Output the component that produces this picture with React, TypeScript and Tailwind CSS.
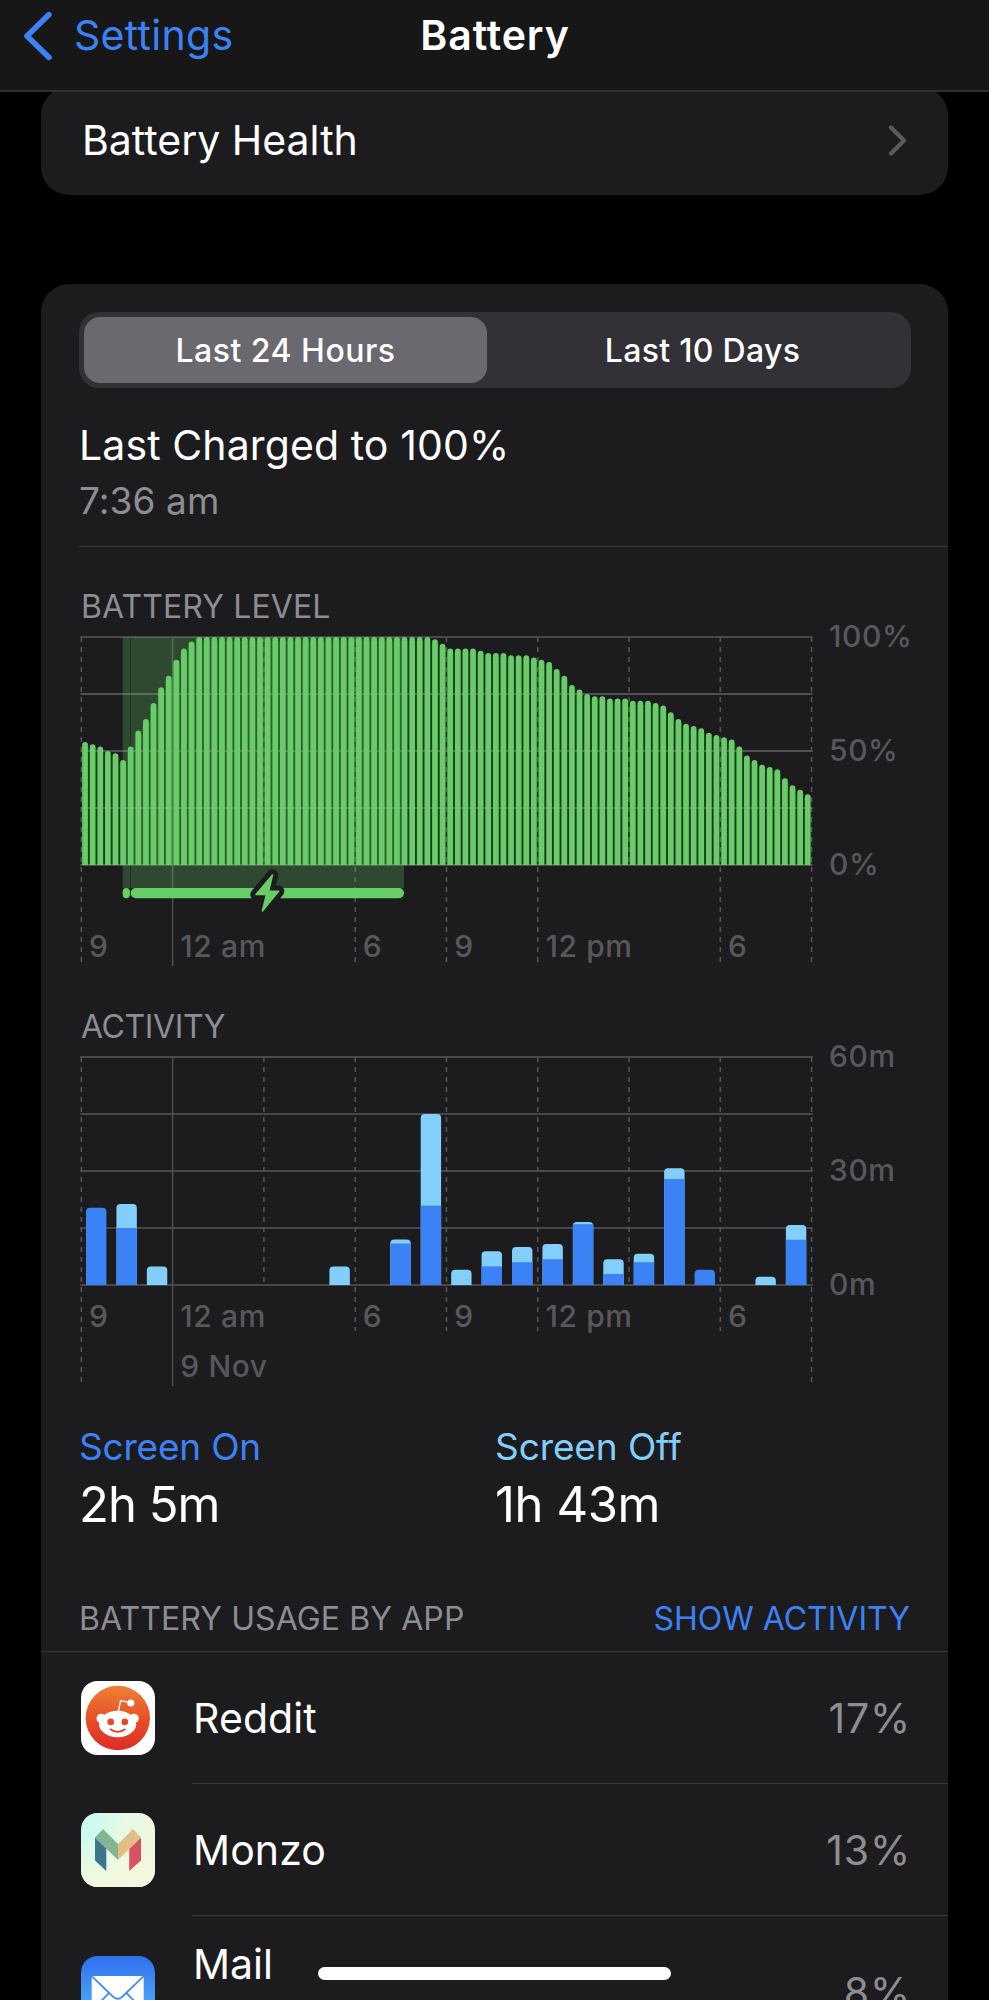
import { ReactNode } from 'react';

const GREEN = '#67ce67';
const SCREEN_ON = '#3c82f7';
const SCREEN_OFF = '#82cffb';

// Plot geometry shared by both charts
const PLOT_X = 2.3;
const PLOT_Y = 10;
const PLOT_W = 730.3;
const PLOT_H = 228;
const HOUR = PLOT_W / 24;
const QUARTER = PLOT_W / 96;

const batteryLevels = [
    54, 53, 52, 50, 49, 46, 52, 59, 64, 71, 78, 83, 90, 95, 98,
    ...Array<number>(31).fill(100),
    99, 97, 95, 95, 95, 95, 94, 93, 93, 93, 92, 92, 92, 91, 90, 89, 86, 83, 79, 77,
    75, 74, 74, 73, 73, 73, 72, 72, 72, 71, 70, 67, 64, 62, 61, 60, 58, 57, 56, 55,
    52, 48, 46, 44, 43, 42, 38, 35, 33, 31
];

interface ActivityHour {
    hour: number;
    on: number;
    total: number;
}

const activity: ActivityHour[] = [
    { hour: 0, on: 20.3, total: 20.3 },
    { hour: 1, on: 15, total: 21.3 },
    { hour: 2, on: 0, total: 4.9 },
    { hour: 8, on: 0, total: 4.9 },
    { hour: 10, on: 10.9, total: 12 },
    { hour: 11, on: 20.9, total: 45 },
    { hour: 12, on: 0, total: 4 },
    { hour: 13, on: 4.9, total: 8.9 },
    { hour: 14, on: 6, total: 10 },
    { hour: 15, on: 6.8, total: 10.8 },
    { hour: 16, on: 16, total: 16.6 },
    { hour: 17, on: 2.9, total: 6.8 },
    { hour: 18, on: 6, total: 8.2 },
    { hour: 19, on: 27.9, total: 30.7 },
    { hour: 20, on: 4, total: 4 },
    { hour: 22, on: 0, total: 2.2 },
    { hour: 23, on: 11.9, total: 15.8 }
];

const xLabels = [
    { tick: 0, text: '9' },
    { tick: 1, text: '12 am' },
    { tick: 3, text: '6' },
    { tick: 4, text: '9' },
    { tick: 5, text: '12 pm' },
    { tick: 7, text: '6' }
];

interface ChartFrameProps {
    yLabels: string[];
    labelY: number;
    tickEnds: number[];
    children: ReactNode;
    overlay?: ReactNode;
}

function ChartFrame({ yLabels, labelY, tickEnds, children, overlay }: ChartFrameProps) {
    return (
        <svg
            width="869"
            height="380"
            viewBox="0 0 869 380"
            className="block overflow-visible text-[30px] font-medium tracking-[0.6px]"
        >
            {[0, 1, 2, 3, 4].map(i => (
                <line
                    key={i}
                    x1={PLOT_X - 1}
                    x2={PLOT_X + PLOT_W + 1}
                    y1={PLOT_Y + (i * PLOT_H) / 4}
                    y2={PLOT_Y + (i * PLOT_H) / 4}
                    stroke="#48484a"
                    strokeWidth="1.8"
                />
            ))}
            {tickEnds.map((end, i) => (
                <line
                    key={i}
                    x1={PLOT_X + i * HOUR * 3}
                    x2={PLOT_X + i * HOUR * 3}
                    y1={PLOT_Y}
                    y2={end}
                    stroke={i === 1 ? '#4c4c4e' : '#525254'}
                    strokeWidth="1.6"
                    strokeDasharray={i === 1 ? undefined : '5 5'}
                />
            ))}
            {children}
            {yLabels.map((label, i) => (
                <text key={label} x="750" y={PLOT_Y + (i * PLOT_H) / 2 + 10.4} fill="#58585b">
                    {label}
                </text>
            ))}
            {xLabels.map(label => (
                <text key={label.tick} x={PLOT_X + label.tick * HOUR * 3 + 7.7} y={labelY} fill="#58585b">
                    {label.text}
                </text>
            ))}
            {overlay}
        </svg>
    );
}

function BatteryLevelChart() {
    const bottom = PLOT_Y + PLOT_H;
    return (
        <ChartFrame
            yLabels={['100%', '50%', '0%']}
            labelY={330}
            tickEnds={[335, 339, 238, 335, 335, 335, 238, 335, 335]}
        >
            <rect x="43.7" y={PLOT_Y} width="7.3" height="251" fill={GREEN} opacity="0.26" />
            <rect x="51.6" y={PLOT_Y} width="273.4" height="251" fill={GREEN} opacity="0.26" />
            {batteryLevels.map((level, i) => {
                const h = (level / 100) * PLOT_H;
                const x = PLOT_X + i * QUARTER + 0.9;
                return (
                    <g key={i} fill={GREEN}>
                        <rect x={x - 0.9} y={bottom - h + 4} width={QUARTER} height={h - 4} opacity="0.15" />
                        <path d={`M${x} ${bottom}V${bottom - h + 2.8}a2.85 2.8 0 0 1 5.7 0V${bottom}z`} />
                    </g>
                );
            })}
            {[1, 2, 3, 4].map(i => (
                <line
                    key={i}
                    x1={PLOT_X}
                    x2={PLOT_X + PLOT_W}
                    y1={PLOT_Y + (i * PLOT_H) / 4}
                    y2={PLOT_Y + (i * PLOT_H) / 4}
                    stroke="#a0a0a0"
                    strokeWidth="1.6"
                    opacity="0.12"
                />
            ))}
            <rect x="43.7" y="261" width="7.2" height="10.2" rx="3.6" fill={GREEN} />
            <rect x="51.7" y="261" width="273.3" height="10.2" rx="5" fill={GREEN} />
            {/* Charging bolt with a cut-out outline */}
            <path
                d="M193.5 248L177 267.6H187.4L183.4 284L199.6 264.2H189.6z"
                fill="#1c1c1e"
                stroke="#1c1c1e"
                strokeWidth="11.5"
                strokeLinejoin="round"
            />
            <path
                d="M193.5 248L177 267.6H187.4L183.4 284L199.6 264.2H189.6z"
                fill={GREEN}
                stroke={GREEN}
                strokeWidth="1.5"
                strokeLinejoin="round"
            />
        </ChartFrame>
    );
}

function ActivityChart() {
    const bottom = PLOT_Y + PLOT_H;
    const w = 20.4;
    return (
        <ChartFrame
            yLabels={['60m', '30m', '0m']}
            labelY={279.5}
            tickEnds={[335, 339, 238, 284, 284, 284, 238, 284, 335]}
            overlay={
                <text x={PLOT_X + HOUR * 3 + 7.7} y="330" fill="#58585b">
                    9 Nov
                </text>
            }
        >
            {activity.map(({ hour, on, total }) => {
                const x = PLOT_X + hour * HOUR + 4.7;
                const top = bottom - (total / 60) * PLOT_H;
                const onTop = bottom - (on / 60) * PLOT_H;
                return (
                    <g key={hour}>
                        <path
                            d={`M${x} ${bottom}V${top + 4}q0 -4 4 -4h${w - 8}q4 0 4 4V${bottom}z`}
                            fill={on === total ? SCREEN_ON : SCREEN_OFF}
                        />
                        {on < total && on > 0 && (
                            <rect x={x} y={onTop} width={w} height={bottom - onTop} fill={SCREEN_ON} />
                        )}
                    </g>
                );
            })}
        </ChartFrame>
    );
}

function RedditIcon() {
    return (
        <svg width="74" height="74" viewBox="0 0 74 74" className="shrink-0">
            <defs>
                <linearGradient id="reddit" x1="0" y1="0" x2="0" y2="1">
                    <stop offset="0" stopColor="#ee8134" />
                    <stop offset="0.5" stopColor="#e65228" />
                    <stop offset="1" stopColor="#dd2b28" />
                </linearGradient>
            </defs>
            <rect width="74" height="74" rx="16.5" fill="#fff" />
            <circle cx="36.8" cy="37" r="32.2" fill="url(#reddit)" />
            <path d="M37.2 31L39.6 19.6L49 21.6" fill="none" stroke="#fff" strokeWidth="1.4" strokeLinejoin="round" />
            <circle cx="49.8" cy="21.9" r="3.5" fill="#fff" />
            <circle cx="20.2" cy="37.4" r="4.7" fill="#fff" />
            <circle cx="53" cy="37.4" r="4.7" fill="#fff" />
            <ellipse cx="36.6" cy="43" rx="18.6" ry="13.2" fill="#fff" />
            <circle cx="29.7" cy="40.9" r="3.3" fill="#e34a28" />
            <circle cx="43.8" cy="40.9" r="3.3" fill="#e34a28" />
            <path d="M29.4 48.3Q36.7 53.6 44 48.3" fill="none" stroke="#e0402a" strokeWidth="1.7" strokeLinecap="round" />
        </svg>
    );
}

function MonzoIcon() {
    return (
        <svg width="74" height="74" viewBox="0 0 74 74" className="shrink-0">
            <defs>
                <linearGradient id="monzo-h" x1="0" y1="0" x2="1" y2="0.25">
                    <stop offset="0" stopColor="#c4fbf5" />
                    <stop offset="0.6" stopColor="#e6f9e4" />
                    <stop offset="1" stopColor="#f0f6e0" />
                </linearGradient>
                <linearGradient id="monzo-v" x1="0" y1="0" x2="0" y2="1">
                    <stop offset="0.3" stopColor="#f4f8d8" stopOpacity="0" />
                    <stop offset="1" stopColor="#f4f8e0" stopOpacity="0.95" />
                </linearGradient>
            </defs>
            <rect width="74" height="74" rx="16.5" fill="url(#monzo-h)" />
            <rect width="74" height="74" rx="16.5" fill="url(#monzo-v)" />
            <path d="M14 24.5L25.3 35.5V58L14 47.5z" fill="#3b768c" />
            <path d="M60 24.5L48.2 35.5V58L60 47.5z" fill="#d95263" />
            <path d="M22 16L37 31V47L14 24.5z" fill="#82b592" />
            <path d="M52 16L37 31V47L60 24.5z" fill="#dfbf83" />
        </svg>
    );
}

function MailIcon() {
    return (
        <svg width="74" height="74" viewBox="0 0 74 74" className="shrink-0">
            <defs>
                <linearGradient id="mail" x1="0" y1="0" x2="0" y2="1">
                    <stop offset="0" stopColor="#3070ee" />
                    <stop offset="0.6" stopColor="#49a0f5" />
                    <stop offset="1" stopColor="#5fc8fa" />
                </linearGradient>
            </defs>
            <rect width="74" height="74" rx="16.5" fill="url(#mail)" />
            <rect x="10.7" y="20" width="52" height="36" rx="2.5" fill="#fff" />
            <path
                d="M11.5 20.8L32.4 41Q36.7 44.6 41 41L61.9 20.8M28 37L11.5 54M45.4 37L62 54"
                fill="none"
                stroke="#4390ea"
                strokeWidth="1.8"
            />
        </svg>
    );
}

interface AppRowProps {
    icon: ReactNode;
    name: string;
    percent: string;
}

function AppRow({ icon, name, percent }: AppRowProps) {
    return (
        <li className="flex h-[132px] pl-10">
            <div className="flex w-[111px] items-center">{icon}</div>
            <div className="flex flex-1 items-center justify-between border-b border-[#38383a] pt-0.5 pr-[37px] pl-px text-[41px]">
                <span className="tracking-[0.1px]">{name}</span>
                <span className="tracking-[0.8px] text-[#8d8d92]">{percent}</span>
            </div>
        </li>
    );
}

export default function App() {
    return (
        <div className="relative h-[2000px] w-[989px] overflow-hidden bg-black font-['Inter',sans-serif] text-white">
            <header className="relative z-10 grid h-[92px] grid-cols-3 items-center border-b-2 border-[#303031] bg-[#171717] pb-[19px] text-[41px]">
                <div className="flex items-center pl-[23px] text-[#3c82f7]">
                    <svg width="30" height="50" viewBox="0 0 30 50" fill="none" stroke="currentColor" strokeWidth="5.6">
                        <path d="M26 3.6L4 25L26 46.4" strokeLinecap="round" strokeLinejoin="round" />
                    </svg>
                    <span className="pl-[21px] tracking-[0.3px]">Settings</span>
                </div>
                <h1 className="pl-px text-center font-semibold tracking-[0.9px]">Battery</h1>
            </header>

            <main className="px-[41px]">
                <div className="-mt-[5px] flex h-[108px] items-center justify-between rounded-[28px] bg-[#1c1c1e] pr-10 pl-[41px] text-[41px]">
                    <span>Battery Health</span>
                    <svg width="21" height="34" viewBox="0 0 21 34" fill="none" stroke="#5a5a5e" strokeWidth="4.4">
                        <path d="M4 3.5L17 16.5L4 29.5" strokeLinecap="round" strokeLinejoin="round" />
                    </svg>
                </div>

                <div className="mt-[89px] rounded-t-[28px] bg-[#1c1c1e] pt-7">
                    <div className="ml-[38px] flex h-[76px] w-[832px] rounded-[20px] bg-[#323137] p-[5px] text-[32px] font-medium">
                        <button className="w-[403px] rounded-2xl bg-[#6a696f] pt-px tracking-[0.5px]">Last 24 Hours</button>
                        <button className="flex-1 pt-px pl-3 tracking-[0.3px]">Last 10 Days</button>
                    </div>

                    <div className="mt-[29px] ml-[38px] border-b border-[#38383a] pb-[17px] leading-[56px]">
                        <div className="text-[41px] tracking-[0.1px]">Last Charged to 100%</div>
                        <div className="text-[37px] tracking-[0.1px] text-[#8d8d92]">7:36 am</div>
                    </div>

                    <div className="mt-10 pl-[38px]">
                        <h2 className="pl-[2px] text-[32px] leading-[40px] tracking-[0.1px] text-[#8d8d92]">BATTERY LEVEL</h2>
                        <BatteryLevelChart />
                        <h2 className="pl-[2px] text-[32px] leading-[40px] tracking-[-0.4px] text-[#8d8d92]">ACTIVITY</h2>
                        <ActivityChart />
                    </div>

                    <div className="grid grid-cols-[416px_1fr] pl-[38px]">
                        <div>
                            <div className="text-[37px] leading-[40px] tracking-[-0.2px] text-[#3c82f7]">Screen On</div>
                            <div className="text-[49px] leading-[75px] tracking-[-1px]">2h 5m</div>
                        </div>
                        <div>
                            <div className="text-[37px] leading-[40px] tracking-[-0.1px] text-[#82cffb]">Screen Off</div>
                            <div className="text-[49px] leading-[75px] tracking-[-0.4px]">1h 43m</div>
                        </div>
                    </div>

                    <div className="mt-[57px] flex justify-between border-b border-[#38383a] pr-[38px] pb-3 pl-[38px] text-[32px] leading-[40px]">
                        <h2 className="tracking-[0.1px] text-[#8d8d92]">BATTERY USAGE BY APP</h2>
                        <button className="text-[#3c82f7]">SHOW ACTIVITY</button>
                    </div>

                    <ul>
                        <AppRow icon={<RedditIcon />} name="Reddit" percent="17%" />
                        <AppRow icon={<MonzoIcon />} name="Monzo" percent="13%" />
                        <li className="flex h-[154px] items-center pl-10 text-[41px]">
                            <div className="w-28">
                                <MailIcon />
                            </div>
                            <span className="flex-1 pb-[57px]">Mail</span>
                            <span className="pr-[37px] tracking-[0.8px] text-[#8d8d92]">8%</span>
                        </li>
                    </ul>
                </div>
            </main>

            {/* Home indicator */}
            <div className="absolute top-[1967px] left-[318px] h-[13px] w-[353px] rounded-full bg-white" />
        </div>
    );
}
